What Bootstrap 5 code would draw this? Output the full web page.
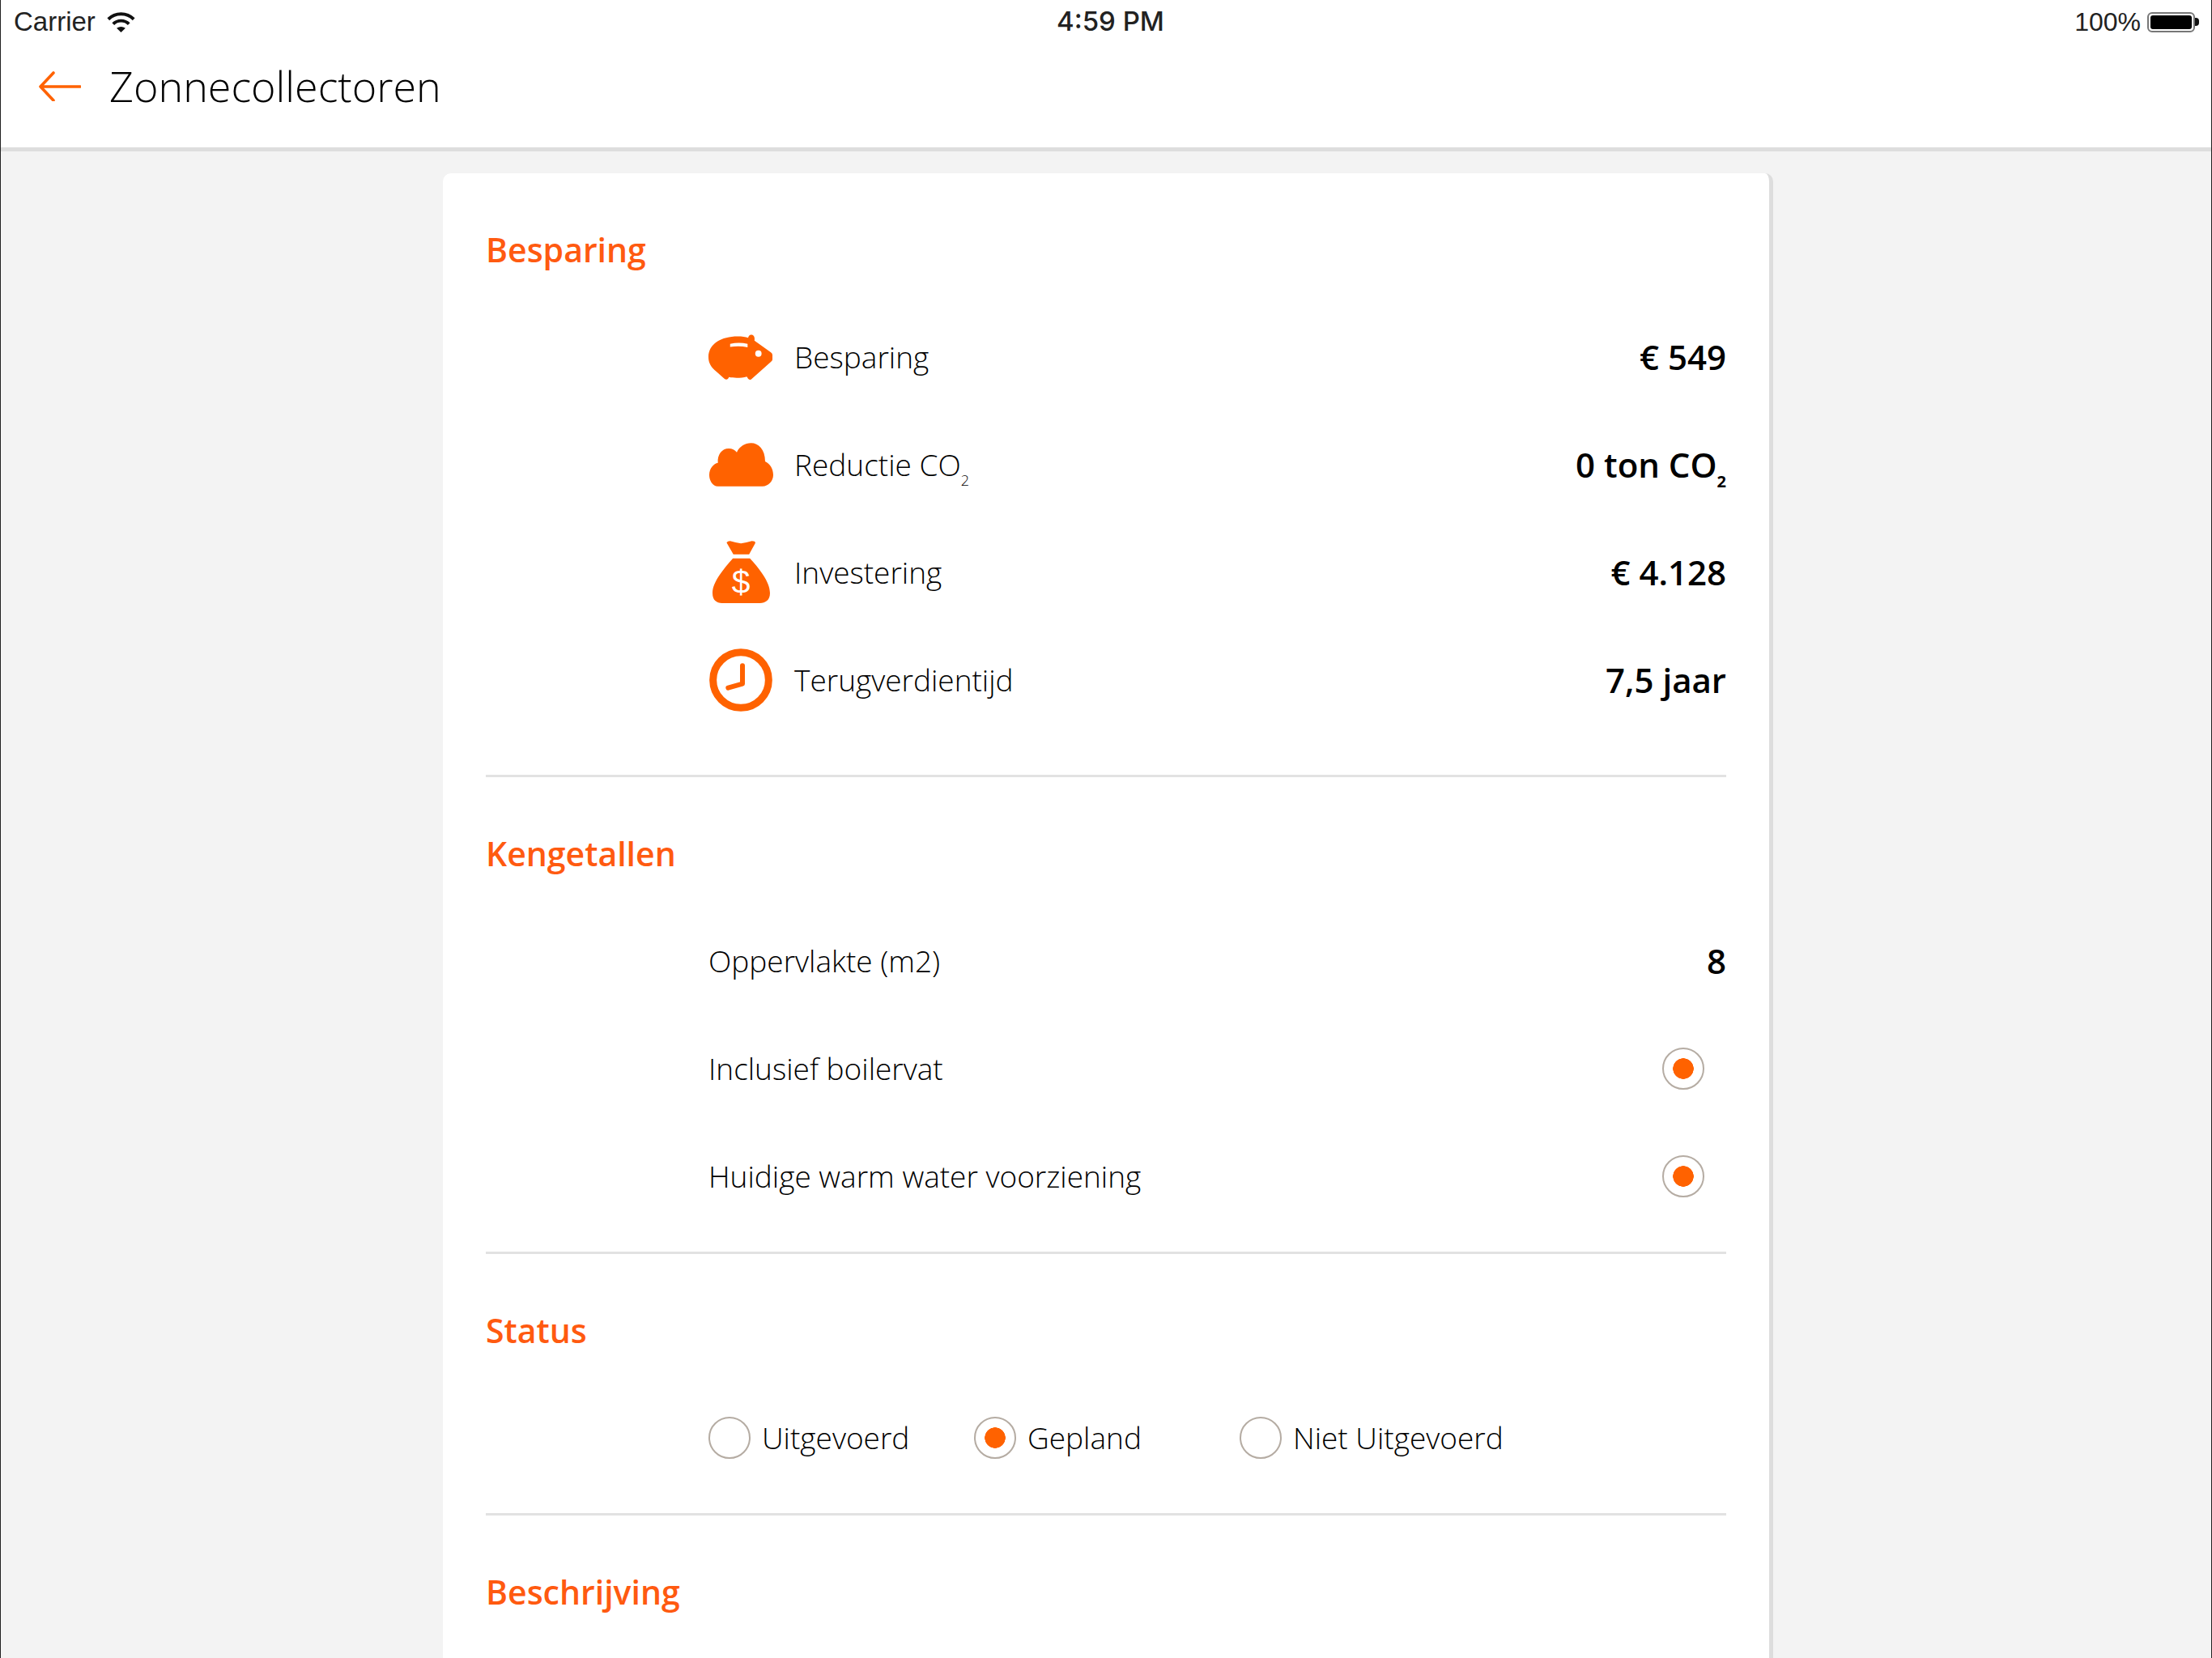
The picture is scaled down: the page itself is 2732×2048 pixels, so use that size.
<!doctype html>
<html lang="nl">
<head>
<meta charset="utf-8">
<title>Zonnecollectoren</title>
<link href="https://cdn.jsdelivr.net/npm/bootstrap@5.3.0/dist/css/bootstrap.min.css" rel="stylesheet">
<style>
html,body{height:2048px;overflow:hidden;background:#f3f3f3}
body{font-family:"Open Sans","Liberation Sans",sans-serif;color:#000}
.frame{height:2048px;border-left:1px solid #222;border-right:1px solid #222;overflow:hidden;display:flex;flex-direction:column}
.topbar{height:187px;background:#fff;border-bottom:5px solid #ddd;flex:none}
.statusline{height:54px;padding:0 15px 0 16px;font-family:"Liberation Sans",sans-serif;font-size:32px;color:#222}
.statusline>div{flex:1 1 0}
.clock-text{font-family:"Inter",sans-serif;font-weight:500;font-size:33px;text-align:center;padding-left:10px}
.carrier-text{font-size:33px}
.wifi{width:35px;height:26px;margin-left:14px}
.batt{width:59px;height:25px;border:2.5px solid #777;border-radius:6px;padding:2px;margin-left:8px}
.batt i{display:block;height:100%;background:#000;border-radius:3px}
.batt-tip{width:5px;height:10px;background:#111;border-radius:0 4px 4px 0}
.titlerow{height:104px;padding-left:47px}
.back{width:52px;height:37px;margin-right:35px}
.pagetitle{font-size:52px;font-weight:300;margin:0;color:#000}
.sheet-wrap{flex:1;padding:27px 541px 0 546px}
.sheet{height:100%;background:#fff;border:0;border-right:5px solid #ddd;border-radius:10px 10px 0 0;padding:60px 53px 0;box-shadow:none}
.sect{padding-bottom:27px}
.sect.wide{padding-bottom:51px}
.sect+.sect{border-top:3px solid #e2e2e2;padding-top:60px}
.sect-title{font-size:41px;font-weight:600;line-height:68px;margin:0 0 32px;color:#ff5a10}
.info-row{height:133px;margin-left:275px;font-size:37px;font-weight:300}
.ico{width:80px;flex:none;margin-right:26px;display:flex;justify-content:center}
.amount{font-weight:600;margin-left:auto;font-size:42px}
.lowdigit{font-size:18px;font-weight:300;line-height:0;position:relative;top:12px}
.amount .lowdigit{font-size:20px;font-weight:700}
.dot-radio.form-check-input{width:52px;height:52px;margin:0;border:2px solid #b5aca3;background:#fff;float:none;flex:none}
.dot-radio.form-check-input:checked{background:radial-gradient(circle,#ff6200 0 12.5px,#fff 13px);border-color:#b5aca3}
.dot-radio.form-check-input:focus{box-shadow:none}
.dot-radio.form-check-input.end-radio{margin-left:auto;margin-right:27px}
.choice{width:328px;margin:0;padding:0;display:flex;align-items:center;min-height:0}
.choice label{margin-left:14px}
.radio-row{height:133px;margin-left:275px;font-size:37px;font-weight:300}
</style>
</head>
<body>
<div class="frame">
  <header class="topbar">
    <div class="statusline d-flex align-items-center">
      <div class="d-flex align-items-center"><span class="carrier-text">Carrier</span>
        <svg class="wifi" viewBox="0 0 32 24"><path d="M1.5 9A20.5 20.5 0 0 1 30.5 9" fill="none" stroke="#111" stroke-width="3.6"/><path d="M7 14.5A12.7 12.7 0 0 1 25 14.5" fill="none" stroke="#111" stroke-width="3.6"/><path d="M11 19.2Q16 15.8 21 19.2L16 24Z" fill="#111"/></svg>
      </div>
      <div class="clock-text">4:59 PM</div>
      <div class="d-flex align-items-center justify-content-end"><span>100%</span><div class="batt"><i></i></div><div class="batt-tip"></div></div>
    </div>
    <div class="titlerow d-flex align-items-center">
      <svg class="back" viewBox="0 0 52 37"><path d="M51 19H3M18 2L2 19L18 36" fill="none" stroke="#ff6200" stroke-width="3.6" stroke-linecap="round" stroke-linejoin="round"/></svg>
      <h1 class="pagetitle">Zonnecollectoren</h1>
    </div>
  </header>
  <main class="sheet-wrap">
    <div class="card sheet">
      <section class="sect wide">
        <h2 class="sect-title">Besparing</h2>
        <div class="info-row d-flex align-items-center">
          <div class="ico"><svg width="82" height="60" viewBox="100 60 245 180"><path fill="#ff6200" d="M100 150C100 100 150 72 210 72C228 72 240 74 250 77C252 68 258 64 264 66C272 68 276 76 274 88L335 132Q342 136 342 142L342 160Q342 164 336 168L262 234Q256 238 250 232L245 224C225 230 195 230 178 226L174 232Q168 238 160 232L130 205C110 190 100 172 100 150Z"/><path fill="#fff" d="M182 100Q215 93 248 100L248 113Q215 106 182 112Z"/><circle cx="289" cy="137" r="12" fill="#fff"/></svg></div>
          <span>Besparing</span><span class="amount">€ 549</span>
        </div>
        <div class="info-row d-flex align-items-center">
          <div class="ico"><svg width="79" height="54" viewBox="103 472 237 160"><path fill="#ff6200" d="M135 632C115 632 103 610 103 590C103 565 120 548 135 545C132 515 150 492 175 492C188 492 198 498 205 506C215 485 235 472 258 472C285 472 310 495 310 540C328 548 340 568 340 590C340 612 322 632 300 632Z"/></svg></div>
          <span>Reductie CO<span class="lowdigit">2</span></span><span class="amount">0 ton CO<span class="lowdigit">2</span></span>
        </div>
        <div class="info-row d-flex align-items-center">
          <div class="ico"><svg width="71" height="77" viewBox="120 85 212 230"><path fill="#ff6200" d="M172 92Q175 86 185 86Q205 92 225 95Q245 92 265 86Q278 86 278 93L255 135L197 135Z"/><path fill="#ff6200" d="M195 150L258 150C290 185 332 235 332 278C332 305 315 315 295 315L155 315C135 315 120 305 120 278C120 235 165 185 195 150Z"/><text x="225" y="278" text-anchor="middle" font-family="Liberation Sans" font-size="122" fill="#fff">$</text></svg></div>
          <span>Investering</span><span class="amount">€ 4.128</span>
        </div>
        <div class="info-row d-flex align-items-center">
          <div class="ico"><svg width="78" height="78" viewBox="107 481 234 234"><circle cx="224" cy="598" r="103" fill="none" stroke="#ff6200" stroke-width="27"/><path d="M230 545V612L177 627" fill="none" stroke="#ff6200" stroke-width="18" stroke-linecap="round" stroke-linejoin="round"/></svg></div>
          <span>Terugverdientijd</span><span class="amount">7,5 jaar</span>
        </div>
      </section>
      <section class="sect">
        <h2 class="sect-title">Kengetallen</h2>
        <div class="info-row d-flex align-items-center"><span>Oppervlakte (m2)</span><span class="amount">8</span></div>
        <div class="info-row d-flex align-items-center"><span>Inclusief boilervat</span><input class="form-check-input dot-radio end-radio" type="radio" checked aria-label="Inclusief boilervat"></div>
        <div class="info-row d-flex align-items-center"><span>Huidige warm water voorziening</span><input class="form-check-input dot-radio end-radio" type="radio" checked aria-label="Huidige warm water voorziening"></div>
      </section>
      <section class="sect">
        <h2 class="sect-title">Status</h2>
        <div class="radio-row d-flex align-items-center">
          <div class="form-check choice"><input class="form-check-input dot-radio" type="radio" name="st" id="s1"><label for="s1">Uitgevoerd</label></div>
          <div class="form-check choice"><input class="form-check-input dot-radio" type="radio" name="st" id="s2" checked><label for="s2">Gepland</label></div>
          <div class="form-check choice"><input class="form-check-input dot-radio" type="radio" name="st" id="s3"><label for="s3">Niet Uitgevoerd</label></div>
        </div>
      </section>
      <section class="sect">
        <h2 class="sect-title">Beschrijving</h2>
      </section>
    </div>
  </main>
</div>
<script src="https://cdn.jsdelivr.net/npm/bootstrap@5.3.0/dist/js/bootstrap.bundle.min.js"></script>
</body>
</html>
